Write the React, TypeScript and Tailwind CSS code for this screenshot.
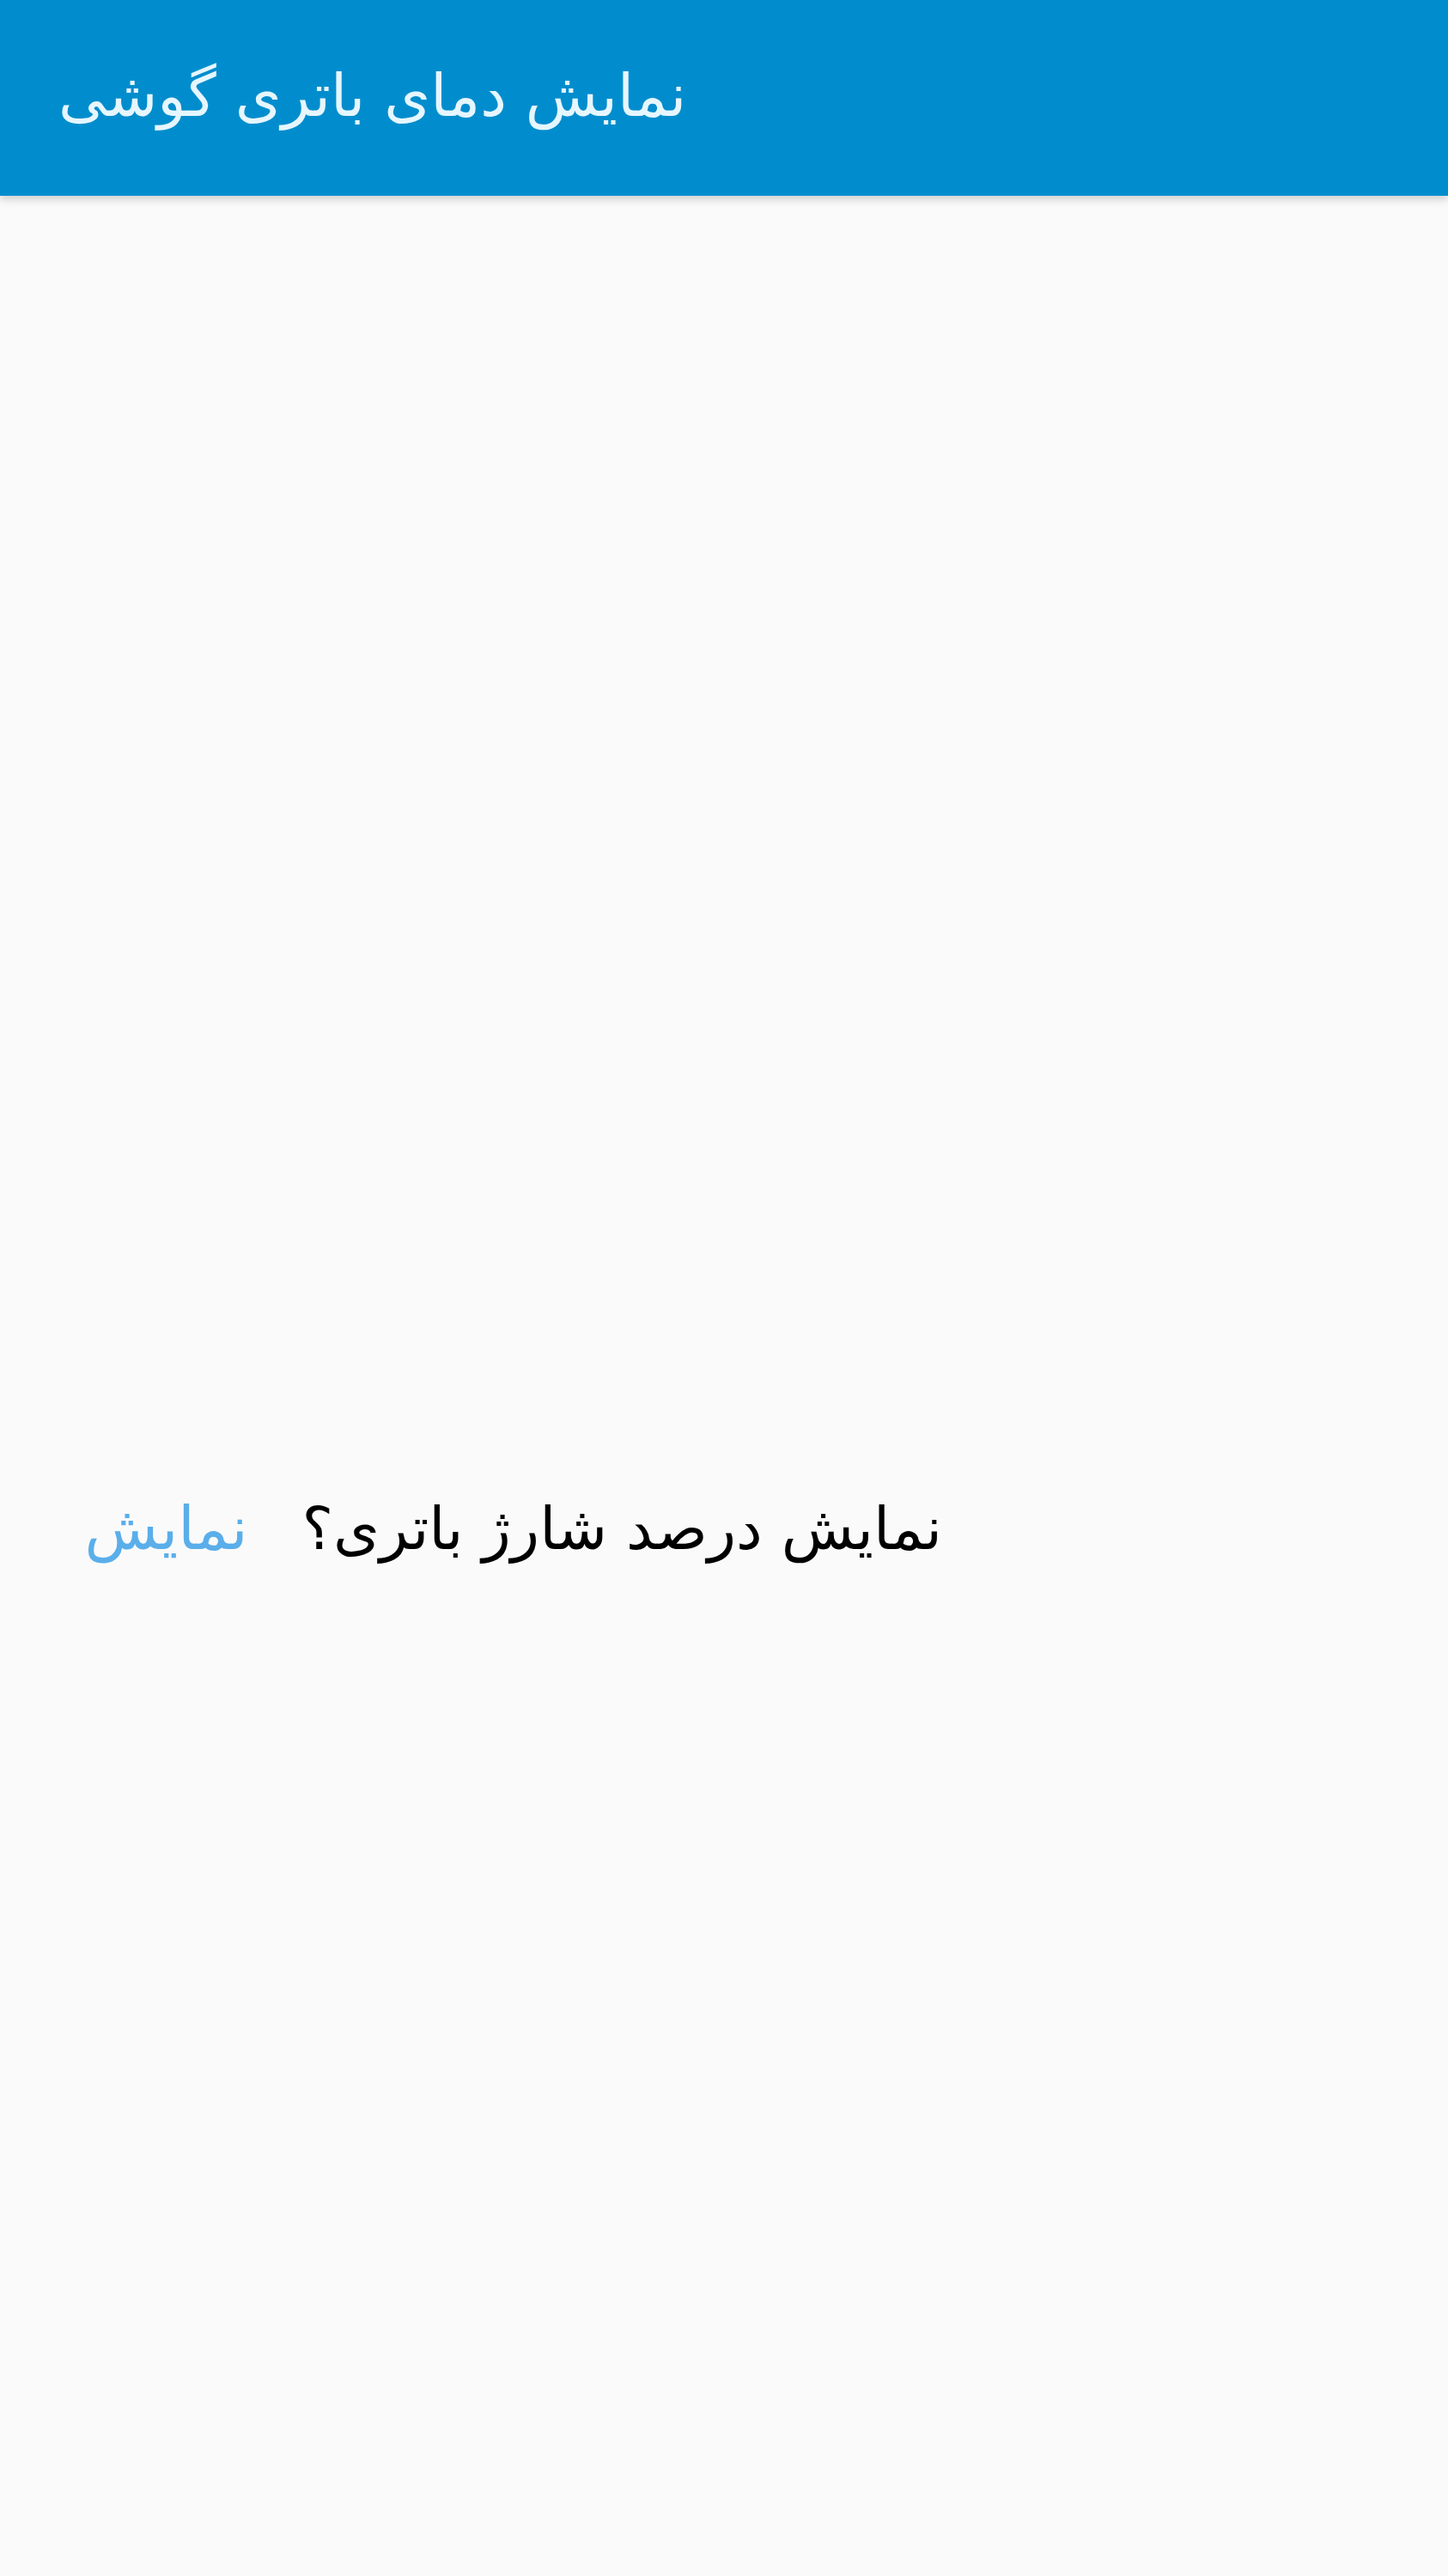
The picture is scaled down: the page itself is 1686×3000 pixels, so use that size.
export default function App() {
  return (
    <div className="w-[1686px] h-[3000px] bg-[#fafafa] flex flex-col" style={{ fontFamily: '"DejaVu Sans", sans-serif' }}>
      <header className="h-[228px] bg-[#018dcd] shrink-0 flex items-center pl-[68px] pb-[6px] shadow-[0_4px_10px_rgba(0,0,0,0.18)] relative z-10">
        <h1 dir="rtl" className="text-[#e6f6ff] text-[69px] leading-none font-normal">نمایش دمای باتری گوشی</h1>
      </header>
      <main className="flex-1 flex flex-col">
        <div className="h-[1497px]" />
        <div dir="rtl" className="flex items-center pr-[589px] gap-[63px] h-[110px]">
          <span className="text-black text-[69px] leading-none">نمایش درصد شارژ باتری؟</span>
          <button className="text-[#5aaeea] text-[70px] leading-none">نمایش</button>
        </div>
      </main>
    </div>
  );
}
